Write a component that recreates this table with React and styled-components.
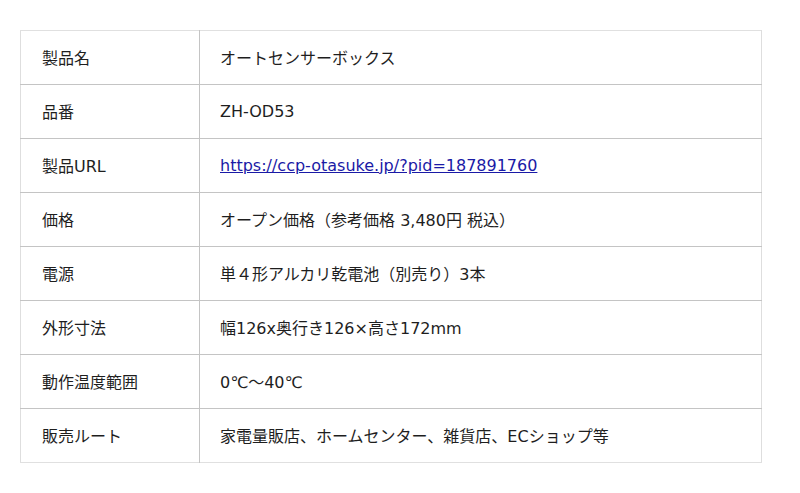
import styled, { createGlobalStyle } from "styled-components"

const GlobalStyle = createGlobalStyle`
  body {
    margin: 0;
    background: #fff;
    font-family: "DejaVu Sans", "Noto Sans CJK JP", sans-serif;
  }
`

const specRows = [
  { label: '製品名', value: 'オートセンサーボックス' },
  { label: '品番', value: 'ZH-OD53' },
  { label: '製品URL', value: 'https://ccp-otasuke.jp/?pid=187891760', link: true },
  { label: '価格', value: 'オープン価格（参考価格 3,480円 税込）' },
  { label: '電源', value: '単４形アルカリ乾電池（別売り）3本' },
  { label: '外形寸法', value: '幅126x奥行き126×高さ172mm' },
  { label: '動作温度範囲', value: '0℃〜40℃' },
  { label: '販売ルート', value: '家電量販店、ホームセンター、雑貨店、ECショップ等' },
]

const Page = styled.div`
  padding: 30px 38px 30px 20px;
`

const SpecTable = styled.table`
  width: 742px;
  border-collapse: collapse;
  border-left: 1px solid #dedede;
  border-right: 1px solid #dedede;
  border-top: 1px solid #e0e0e0;
  font-size: 16px;
  color: #1e1e1e;
`

const Row = styled.tr`
  height: 54px;
  border-bottom: 1px solid ${(p) => (p.$last ? '#e0e0e0' : '#c4c4c4')};
`

const Label = styled.th`
  width: 157px;
  padding: 0 0 1px 21px;
  text-align: left;
  font-weight: normal;
  border-right: 1px solid #c4c4c4;
`

const Value = styled.td`
  padding: 0 0 1px 20px;
`

const Link = styled.a`
  color: #1a1aa6;
  text-decoration: underline;
`

function App() {
  return (
    <Page>
      <GlobalStyle />
      <SpecTable>
        <tbody>
          {specRows.map((row, i) => (
            <Row key={row.label} $last={i === specRows.length - 1}>
              <Label>{row.label}</Label>
              <Value>
                {row.link ? <Link href={row.value}>{row.value}</Link> : row.value}
              </Value>
            </Row>
          ))}
        </tbody>
      </SpecTable>
    </Page>
  )
}

export default App
